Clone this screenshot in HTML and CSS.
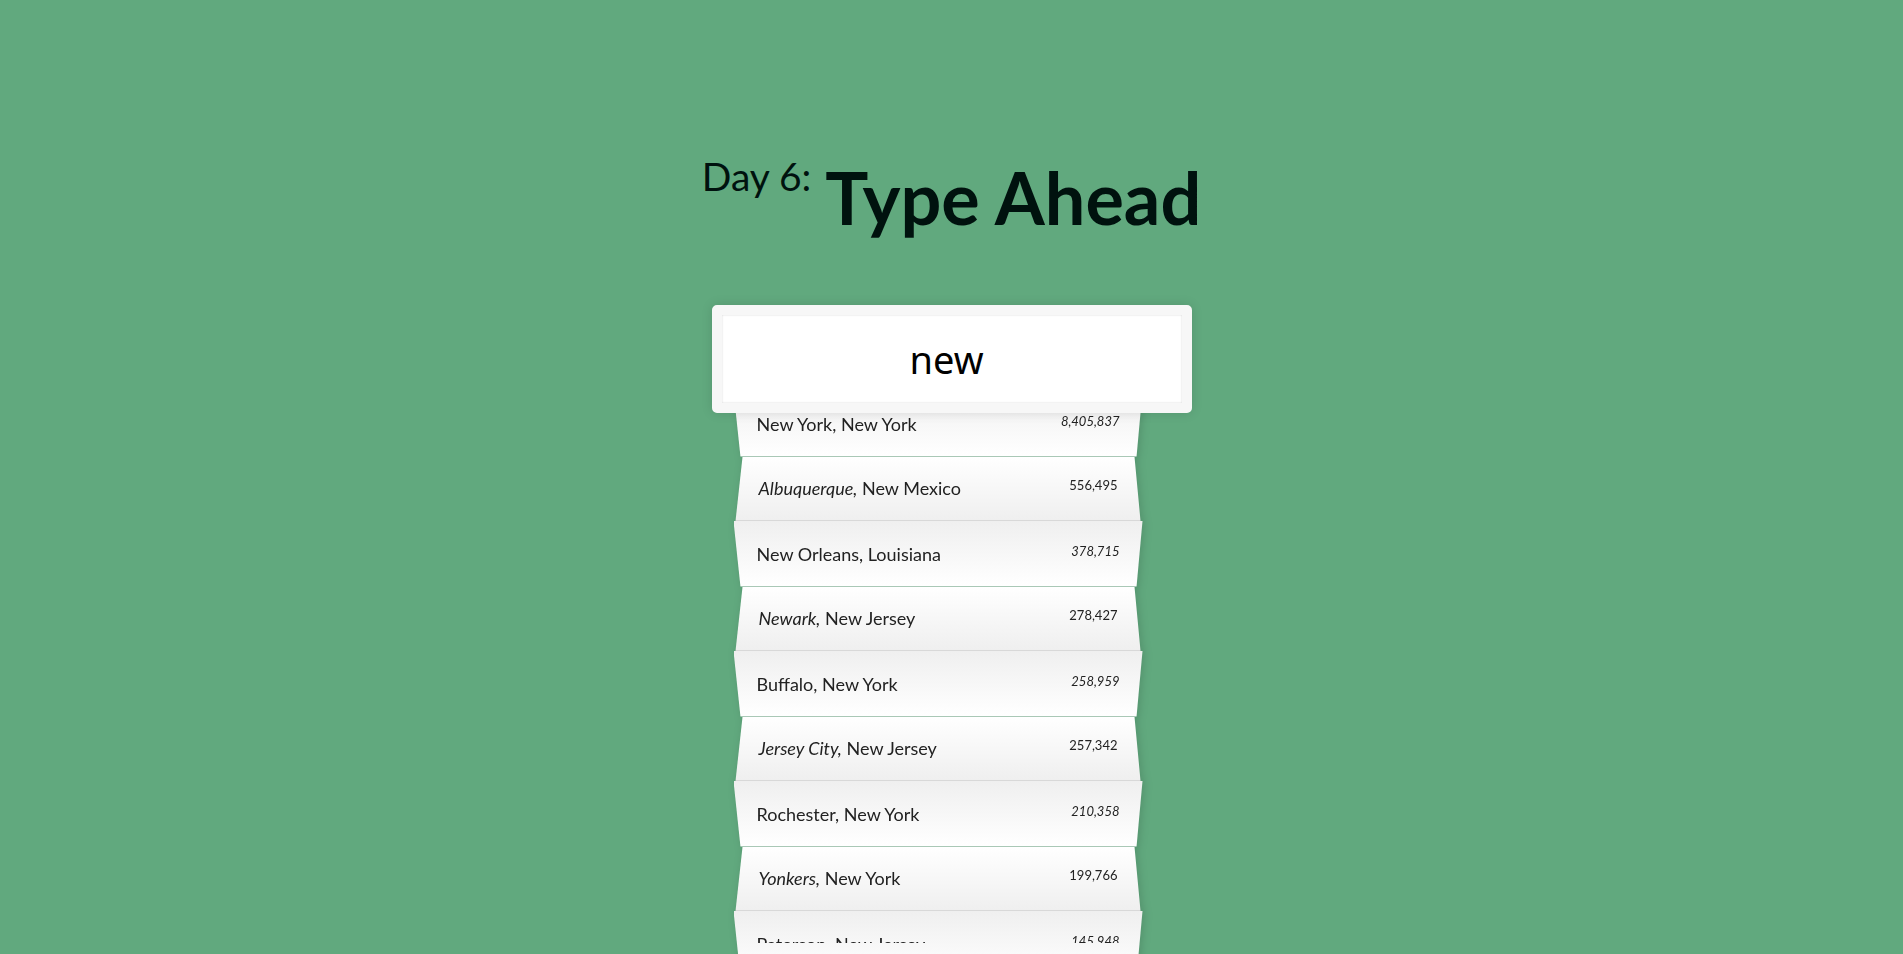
FILE: index.html
```html
<!DOCTYPE html>
<html lang="en">
<head>
<meta charset="utf-8">
<title>Type Ahead</title>
<link rel="stylesheet" href="styles.css">
</head>
<body>
<main class="page">
  <h1 class="title"><span class="title-day">Day 6:</span><span>Type Ahead</span></h1>
  <form class="search-form">
    <input class="search" type="text" value="new " aria-label="City or State">
    <ul class="suggestions">
      <li><span class="name">New York, New York</span><span class="population">8,405,837</span></li>
      <li><span class="name"><em>Albuquerque,</em> New Mexico</span><span class="population">556,495</span></li>
      <li><span class="name">New Orleans, Louisiana</span><span class="population">378,715</span></li>
      <li><span class="name"><em>Newark,</em> New Jersey</span><span class="population">278,427</span></li>
      <li><span class="name">Buffalo, New York</span><span class="population">258,959</span></li>
      <li><span class="name"><em>Jersey City,</em> New Jersey</span><span class="population">257,342</span></li>
      <li><span class="name">Rochester, New York</span><span class="population">210,358</span></li>
      <li><span class="name"><em>Yonkers,</em> New York</span><span class="population">199,766</span></li>
      <li class="cut"><span class="name">Paterson, New Jersey</span><span class="population">145,948</span></li>
    </ul>
  </form>
</main>
</body>
</html>
```
FILE: styles.css
```css
* { box-sizing: border-box; }

body {
  margin: 0;
  min-height: 100vh;
  background: #61a97e;
  color: #222;
  font-family: Lato, "Open Sans", sans-serif;
}

.page {
  display: flex;
  flex-direction: column;
  align-items: center;
  height: 100vh;
  padding-top: 152px;
  overflow: hidden;
}

.title {
  display: flex;
  align-items: flex-start;
  gap: 14px;
  margin: 0 0 63px;
  color: #00120e;
  font-size: 72px;
  line-height: 90px;
  font-weight: 700;
}

.title-day {
  font-size: 39px;
  line-height: 48px;
  font-weight: 400;
}

.search-form {
  width: 100%;
  max-width: 480px;
}

.search {
  position: relative;
  z-index: 2;
  display: block;
  width: 100%;
  height: 108px;
  padding: 0;
  border: 10px solid #f7f7f7;
  border-radius: 5px;
  outline: 0;
  background: #fff;
  box-shadow: 0 0 12px rgba(0, 0, 0, .12), inset 0 0 2px rgba(0, 0, 0, .19);
  color: #000;
  font-family: "Noto Sans", sans-serif;
  font-size: 38px;
  text-align: center;
}

.suggestions {
  margin: -22px 49px 0 22px;
  padding: 0;
  list-style: none;
  filter: drop-shadow(2px 0 4px rgba(0, 0, 0, .14));
}

.suggestions li {
  position: relative;
  isolation: isolate;
  display: flex;
  justify-content: space-between;
  align-items: flex-start;
  height: 66px;
  padding: 19px 23px 0 23px;
}

/* Folded-paper panel behind each row */
.suggestions li::before {
  content: "";
  position: absolute;
  inset: 0;
  z-index: -1;
  border-bottom: 1px solid #a9c8b6;
  background: linear-gradient(#efefef, #fff);
  clip-path: polygon(0 0, 100% 0, calc(100% - 6px) 100%, 7px 100%);
}

.suggestions li:nth-child(even) {
  height: 64px;
  padding: 17px 25px 0 25px;
}

.suggestions li:nth-child(even)::before {
  border-bottom-color: #d8d8d8;
  background: linear-gradient(#fff, #efefef);
  clip-path: polygon(9px 0, calc(100% - 8px) 0, calc(100% - 2px) 100%, 2px 100%);
}

.name {
  font-size: 18px;
  line-height: 28px;
}

.population {
  font-size: 13px;
  line-height: 23px;
}

.suggestions li:nth-child(odd) .population { font-style: italic; }

.suggestions .cut > * {
  height: 13px;
  overflow: hidden;
}
```
